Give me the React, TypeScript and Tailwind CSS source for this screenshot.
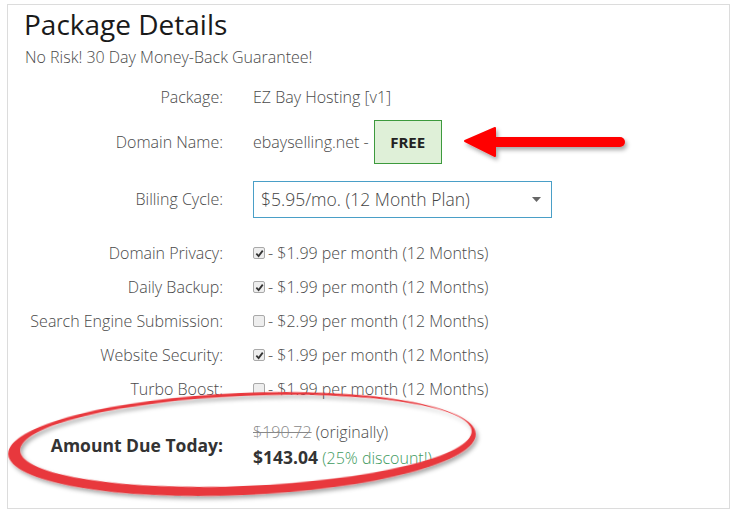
import React from 'react'

const font = { fontFamily: '"Open Sans", "Noto Sans", Arial, sans-serif' }

function Check({ on }: { on: boolean }) {
  return (
    <span className="relative inline-flex h-[12px] w-[12px] shrink-0 items-center justify-center rounded-[2px] border border-[#a9a9a9] bg-[#eeeeee]">
      {on && (
        <svg width="9" height="9" viewBox="0 0 10 10">
          <path d="M1.5 5.2 L4 7.8 L8.6 1.8" fill="none" stroke="#333" strokeWidth="2" />
        </svg>
      )}
    </span>
  )
}

function Row({ label, h, children }: { label: React.ReactNode; h: string; children: React.ReactNode }) {
  return (
    <div className={`flex items-center ${h}`}>
      <div className="w-[215px] shrink-0 text-right">{label}</div>
      <div className="ml-[30px] flex items-center">{children}</div>
    </div>
  )
}

function Addon({ label, on, price }: { label: string; on: boolean; price: string }) {
  return (
    <Row label={label} h="h-[34px]">
      <Check on={on} />
      <span className="ml-[3px]">- {price} per month (12 Months)</span>
    </Row>
  )
}

export default function App() {
  return (
    <div className="relative h-[513px] w-[740px] overflow-hidden bg-white" style={font}>
      <div className="ml-[7px] mt-[4px] h-[505px] w-[723px] border border-[#dcdcdc] text-[16px] font-light text-[#4a4a4a]">
        <div className="pl-[16px] pt-[2px]">
          <h1 className="text-[28px] font-normal leading-[34px] text-[#1a1a1a]">Package Details</h1>
          <p className="mt-[6px] pl-[1px] leading-[20px]">No Risk! 30 Day Money-Back Guarantee!</p>
        </div>

        <div className="mt-[13px]">
          <Row label="Package:" h="h-[34px]">
            <span>EZ Bay Hosting [v1]</span>
          </Row>
          <Row label="Domain Name:" h="h-[56px]">
            <span>ebayselling.net -</span>
            <span className="ml-[5px] flex h-[44px] w-[68px] items-center justify-center border border-[#3d9a3d] bg-[#dff0d8] text-[15px] font-bold text-[#222]">
              FREE
            </span>
          </Row>
          <Row label="Billing Cycle:" h="h-[58px]">
            <div className="flex h-[37px] w-[299px] items-center justify-between border border-[#4a9fc7] pl-[7px] pr-[10px] text-[17.5px] text-[#444]">
              <span>$5.95/mo. (12 Month Plan)</span>
              <svg width="9" height="5" viewBox="0 0 9 5">
                <path d="M0 0 H9 L4.5 5 Z" fill="#666" />
              </svg>
            </div>
          </Row>
          <div className="h-[8px]" />
          <Addon label="Domain Privacy:" on price="$1.99" />
          <Addon label="Daily Backup:" on price="$1.99" />
          <Addon label="Search Engine Submission:" on={false} price="$2.99" />
          <Addon label="Website Security:" on price="$1.99" />
          <Addon label="Turbo Boost:" on={false} price="$1.99" />
          <Row label={<span className="text-[17.5px] font-bold text-[#333]">Amount Due Today:</span>} h="h-[78px]">
            <div className="flex flex-col leading-[25px]">
              <span>
                <span className="text-[#888] line-through">$190.72</span> (originally)
              </span>
              <span>
                <span className="text-[17.5px] font-bold text-[#333]">$143.04</span>{' '}
                <span className="text-[#3e9a5e]">(25% discount!)</span>
              </span>
            </div>
          </Row>
        </div>
      </div>

      <svg className="pointer-events-none absolute left-0 top-0" width="740" height="513" viewBox="0 0 740 513">
        <defs>
          <filter id="sh" x="-10%" y="-30%" width="120%" height="160%">
            <feDropShadow dx="2" dy="3" stdDeviation="2" floodColor="#000" floodOpacity="0.35" />
          </filter>
        </defs>
        <g filter="url(#sh)">
          <line x1="492" y1="142" x2="620" y2="142" stroke="#f00" strokeWidth="10" strokeLinecap="round" />
          <path d="M465 141 L495 128 L495 156 Z" fill="#f00" stroke="#f00" strokeWidth="2" strokeLinejoin="round" />
        </g>
        <g filter="url(#sh)" transform="rotate(-2.5 242 444)">
          <path
            fillRule="evenodd"
            fill="#e8383d"
            d="M8 444 A234 51 0 1 0 476 444 A234 51 0 1 0 8 444 Z M20 441 A226 45 0 1 0 472 441 A226 45 0 1 0 20 441 Z"
          />
        </g>
      </svg>
    </div>
  )
}
